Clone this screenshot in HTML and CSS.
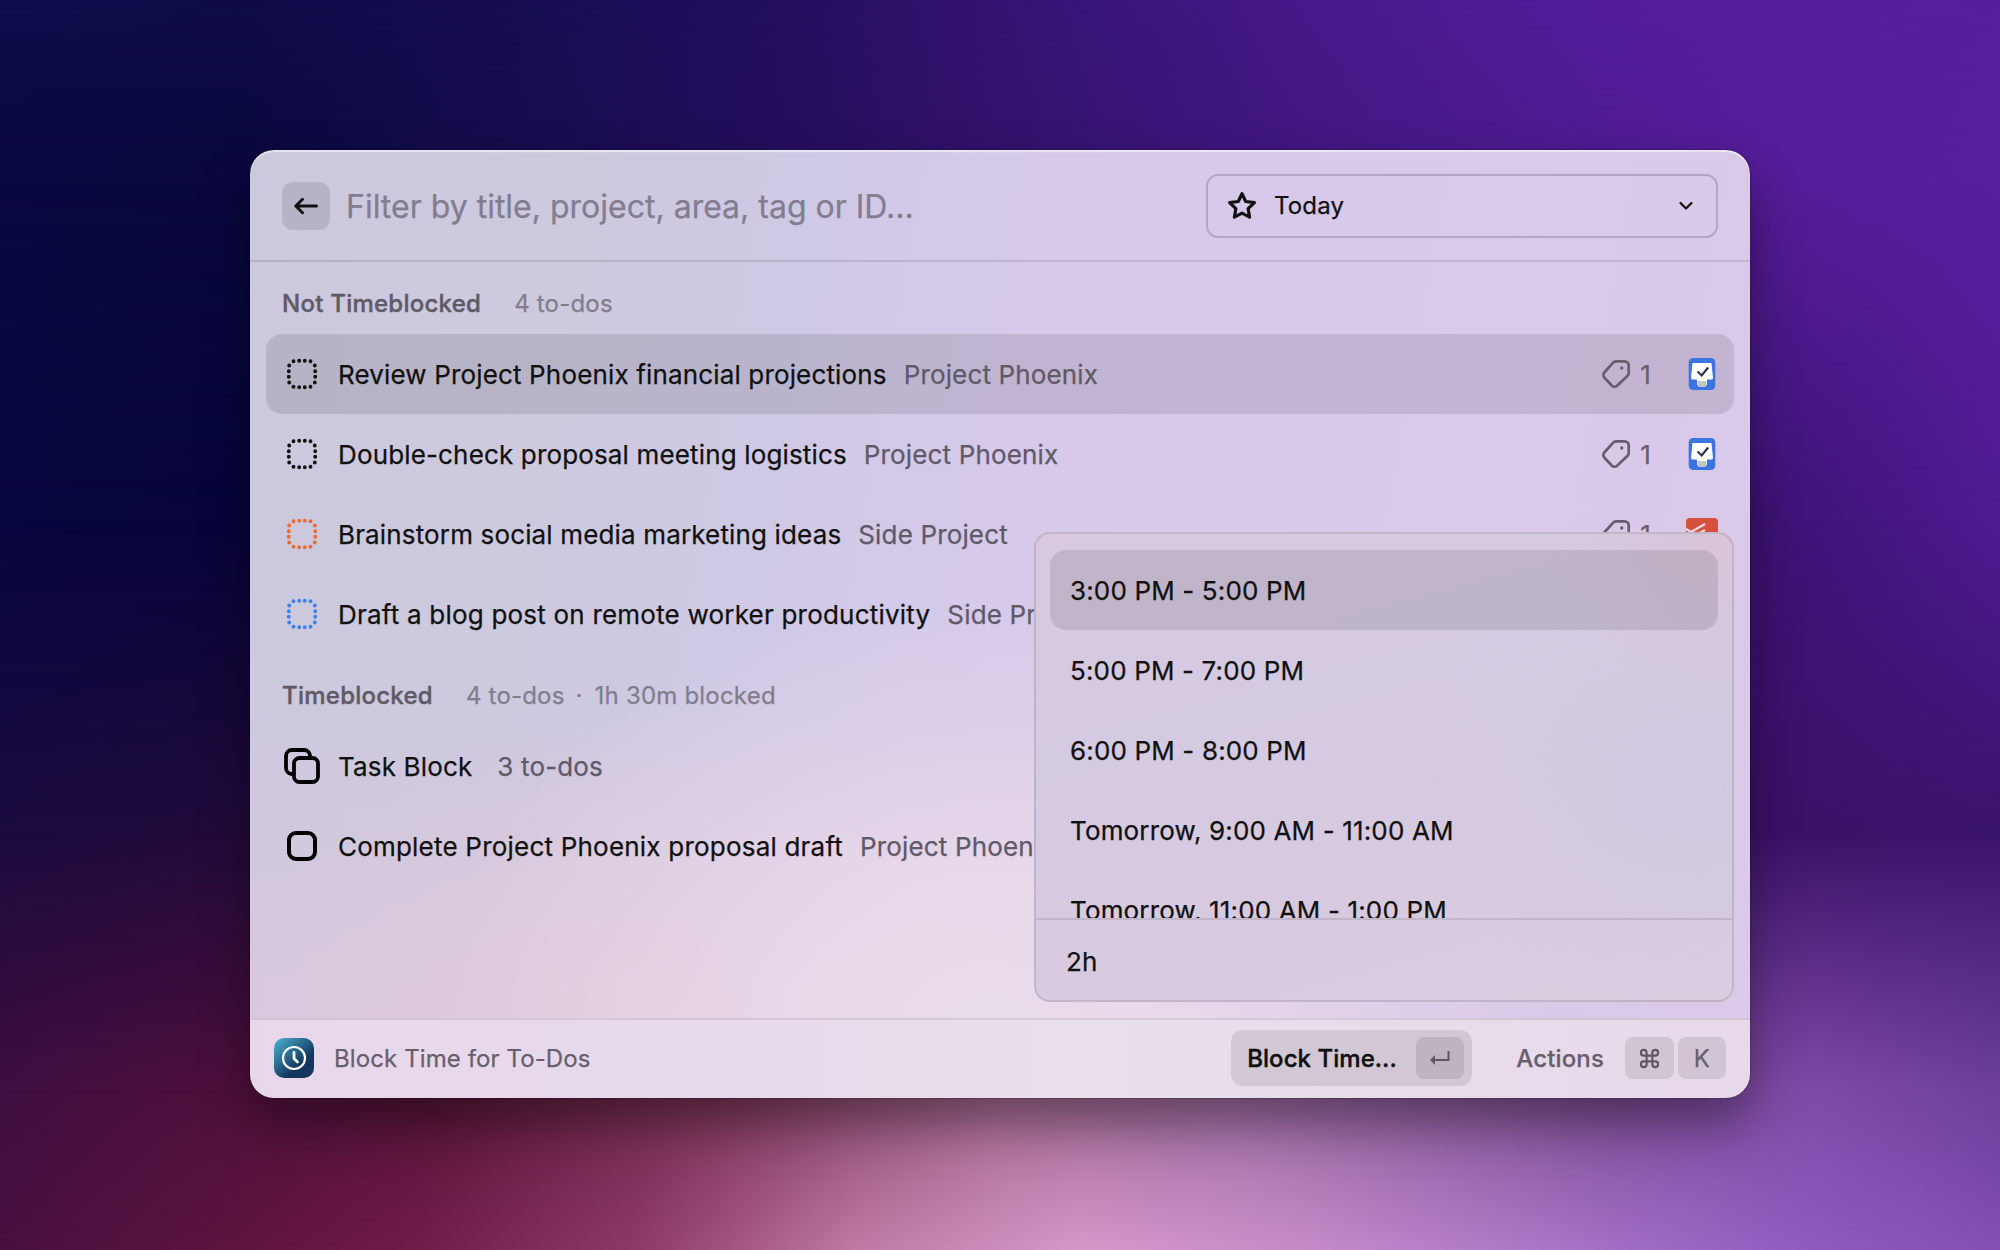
FILE: index.html
```
<!DOCTYPE html>
<html lang="en">
<head>
<meta charset="utf-8">
<title>Block Time for To-Dos</title>
<link rel="stylesheet" href="styles.css">
</head>
<body>
<svg class="defs" width="0" height="0" aria-hidden="true">
  <symbol id="dotted" viewBox="-18 -18 36 36"><path d="M-8.500-12.800h0M-2.800-13.200h0M2.800-13.200h0M8.500-12.800h0M12.800-8.500h0M13.200-2.800h0M13.200 2.800h0M12.800 8.500h0M8.500 12.800h0M2.800 13.200h0M-2.800 13.200h0M-8.500 12.800h0M-12.800 8.500h0M-13.200 2.800h0M-13.200-2.800h0M-12.800-8.500h0" fill="none" stroke="currentColor" stroke-width="3.900" stroke-linecap="round"/></symbol>
  <symbol id="tag" viewBox="0 0 32 32"><path d="M16 3.300h8.700a4 4 0 0 1 4 4v7.700a4 4 0 0 1-1.100 2.800L17.300 27.500a4 4 0 0 1-5.600 0l-7.200-7.700a4 4 0 0 1 0-5.600L13.200 4.600a4 4 0 0 1 2.800-1.300z" fill="none" stroke="currentColor" stroke-width="2.700"/><circle cx="21.700" cy="10" r="1.700" fill="currentColor"/></symbol>
  <symbol id="things" viewBox="0 0 28 32"><rect x=".7" width="26.600" height="32" rx="4.500" fill="#3b74e0"/><path d="M4.500 5h19L25 20a2 2 0 0 1-2 1.500h-4v5.500h-10v-5.500H5A2 2 0 0 1 3 20z" fill="#fff"/><path d="M9.500 23h9v4a2 2 0 0 1-2 2h-5a2 2 0 0 1-2-2z" fill="#c1c4c8"/><path d="M9.500 13.500l4.200 4 6.500-8" fill="none" stroke="#2b3646" stroke-width="2.200"/></symbol>
</svg>
<div class="layer l0"></div><div class="layer l1"></div><div class="layer l2"></div><div class="layer l3"></div><div class="layer l4"></div><div class="layer l5"></div>
<main class="window">
  <header class="top">
    <button class="back"><svg width="26" height="22" viewBox="0 0 26 22" fill="none" stroke="#111" stroke-width="3" stroke-linecap="round" stroke-linejoin="round"><path d="M23.500 11H2.800M9.500 4.300L2.800 11l6.700 6.700"/></svg></button>
    <span class="filter">Filter by title, project, area, tag or ID...</span>
    <div class="select">
      <svg width="32" height="32" viewBox="0 0 32 32" fill="none" stroke="#111" stroke-width="3.200" stroke-linejoin="round"><path d="M16 3.700L19.700 11.500 28.400 12.700 22.100 18.600 23.600 27.200 16 23.200 8.400 27.200 9.900 18.600 3.600 12.700 12.300 11.500z"/></svg>
      <span class="choice">Today</span>
      <svg class="chev" width="14" height="10" viewBox="0 0 14 10" fill="none" stroke="#111" stroke-width="2.200" stroke-linecap="round" stroke-linejoin="round"><path d="M1.500 2L7 7.500 12.500 2"/></svg>
    </div>
  </header>
  <section class="list">
    <h2 class="section"><b>Not Timeblocked</b><span>4 to-dos</span></h2>
    <div class="row selected"><svg class="ico"><use href="#dotted"/></svg><span class="title">Review Project Phoenix financial projections</span><span class="sub">Project Phoenix</span><svg class="tag"><use href="#tag"/></svg><span class="count">1</span><svg class="app"><use href="#things"/></svg></div>
    <div class="row"><svg class="ico"><use href="#dotted"/></svg><span class="title">Double-check proposal meeting logistics</span><span class="sub">Project Phoenix</span><svg class="tag"><use href="#tag"/></svg><span class="count">1</span><svg class="app"><use href="#things"/></svg></div>
    <div class="row"><svg class="ico orange"><use href="#dotted"/></svg><span class="title">Brainstorm social media marketing ideas</span><span class="sub">Side Project</span><svg class="tag"><use href="#tag"/></svg><span class="count">1</span><svg class="app wide" viewBox="0 0 32 32"><rect width="32" height="32" rx="4" fill="#d6503c"/><path d="M0 11l5 3L19 6M0 17l5 3 14-8" fill="none" stroke="#f0dcea" stroke-width="2.200"/></svg></div>
    <div class="row loose"><svg class="ico blue"><use href="#dotted"/></svg><span class="title">Draft a blog post on remote worker productivity</span><span class="sub">Side Project</span></div>
    <h2 class="section"><b>Timeblocked</b><span>4 to-dos <i>·</i> 1h 30m blocked</span></h2>
    <div class="row"><svg class="ico" viewBox="0 0 36 36" fill="none" stroke="#000" stroke-width="3.800"><rect x="10" y="10" width="24" height="24" rx="5.500"/><path d="M10 26H8a6 6 0 0 1-6-6V8a6 6 0 0 1 6-6h12a6 6 0 0 1 6 6v2"/></svg><span class="title">Task Block</span><span class="sub far">3 to-dos</span></div>
    <div class="row loose"><svg class="ico" viewBox="0 0 36 36" fill="none" stroke="#000" stroke-width="4"><rect x="5" y="5" width="26" height="26" rx="7"/></svg><span class="title">Complete Project Phoenix proposal draft</span><span class="sub">Project Phoenix</span></div>
  </section>
  <footer class="bar">
    <svg class="logo" width="40" height="40" viewBox="0 0 40 40"><defs><linearGradient id="g" x1="0" y1="0" x2=".9" y2="1"><stop offset="0" stop-color="#4db4d6"/><stop offset=".7" stop-color="#14365c"/></linearGradient></defs><rect width="40" height="40" rx="10" fill="url(#g)"/><g fill="none" stroke="#fff" stroke-linecap="round" stroke-linejoin="round"><circle cx="20" cy="20" r="11" stroke-width="2.200"/><path d="M20 14.500v6l3.500 3.500" stroke-width="2.800"/></g></svg>
    <span class="name">Block Time for To-Dos</span>
    <div class="primary"><span>Block Time...</span><kbd class="key dark"><svg width="22" height="18" viewBox="0 0 22 18"><path d="M19.500 2v9H5" fill="none" stroke="#5f5864" stroke-width="2"/><path d="M1 11l5-5v10z" fill="#5f5864"/></svg></kbd></div>
    <span class="actions">Actions</span>
    <kbd class="key cmd"><svg width="23" height="23" viewBox="0 0 24 24" fill="none" stroke="#5f5864" stroke-width="2.200"><path d="M18 3a3 3 0 0 0-3 3v12a3 3 0 1 0 3-3H6a3 3 0 1 0 3 3V6a3 3 0 1 0-3 3h12a3 3 0 1 0 0-6z"/></svg></kbd>
    <kbd class="key">K</kbd>
  </footer>
  <aside class="menu">
    <div class="options">
      <div class="opt on">3:00 PM - 5:00 PM</div>
      <div class="opt">5:00 PM - 7:00 PM</div>
      <div class="opt">6:00 PM - 8:00 PM</div>
      <div class="opt">Tomorrow, 9:00 AM - 11:00 AM</div>
      <div class="opt">Tomorrow, 11:00 AM - 1:00 PM</div>
    </div>
    <div class="entry">2h</div>
  </aside>
</main>
</body>
</html>
```
FILE: styles.css
```
* { box-sizing: border-box; margin: 0; }
body { width: 2000px; height: 1250px; overflow: hidden; position: relative; display: flex; justify-content: center; align-items: flex-start; padding-top: 150px; font-family: Inter, "Liberation Sans", sans-serif; font-size: 26px; letter-spacing: .15px; -webkit-text-stroke: .25px; color: #111; background: #0b0a42; }
.defs { position: absolute; }

/* Wallpaper: horizontal colour bands, each faded into the one above. */
.layer { position: absolute; inset: 0; }
.l0 { background: linear-gradient(90deg, #0e0c4b 0, #0e0b48 12%, #150d50 25%, #220f5e 38%, #331371 50%, #46198a 65%, #521d9a 80%, #571f9e 100%); }
.l1 { background: linear-gradient(90deg, #0a0842 0, #0a083e 12%, #150c4c 25%, #230e5a 38%, #32126a 50%, #461886 70%, #541d98 88%, #581f9e 100%); -webkit-mask: linear-gradient(transparent 0, #000 180px); }
.l2 { background: linear-gradient(90deg, #080640 0, #07053a 12%, #180c50 50%, #3c1274 88%, #4e1b91 100%); -webkit-mask: linear-gradient(transparent 180px, #000 520px); }
.l3 { background: linear-gradient(90deg, #1a0a3e 0, #200a3a 12%, #5a2058 50%, #3a1066 88%, #3a136c 100%); -webkit-mask: linear-gradient(transparent 520px, #000 830px); }
.l4 { background: linear-gradient(90deg, #3f0e40 0, #4c0f3c 10%, #571538 22%, #7c3458 36%, #a5688f 50%, #9b6aa0 62%, #7c4c94 80%, #7e4aa8 91%, #6c409c 100%); -webkit-mask: linear-gradient(transparent 830px, #000 1090px); }
.l5 { background: linear-gradient(90deg, #47103f 0, #5a133f 10%, #701a46 20%, #8f3a67 32%, #bf7ba6 43%, #d598c9 54%, #c68cc9 65%, #a974c6 78%, #905cc0 90%, #8250b2 100%); -webkit-mask: linear-gradient(transparent 1090px, #000 1250px); }

.window { position: relative; width: 1500px; height: 948px; border-radius: 24px; display: flex; flex-direction: column; overflow: hidden; isolation: isolate;
  background: radial-gradient(ellipse 560px 420px at 740px 880px, #e9dcea 0, #e9daeaee 30%, #e9d9ea00 100%), radial-gradient(ellipse 440px 320px at 420px 880px, #e5c8d8cc 0, #e5c8d800 100%), radial-gradient(ellipse 700px 420px at 0 100%, #dac8dc 0, #dac8dc00 100%), linear-gradient(100deg, #ccc8de 0, #cdc9df 22%, #cfc9e5 34%, #d7c9ea 50%, #dac9e9 100%);
  box-shadow: inset 0 2px 1px #ffffff90; }
body::after { content: ""; position: absolute; left: 250px; top: 150px; width: 1500px; height: 948px; border-radius: 24px; box-shadow: 0 0 2px #0008, 0 26px 50px #00000060; pointer-events: none; }

.top { height: 112px; border-bottom: 2px solid #0000001a; display: flex; align-items: center; padding: 2px 32px 0; flex: none; }
.back { width: 48px; height: 48px; border: 0; border-radius: 11px; background: #0000001a; display: grid; place-items: center; padding: 0; }
.filter { margin-left: 16px; font-size: 32px; letter-spacing: 0; color: #827d90; }
.select { width: 512px; height: 64px; margin-left: auto; border: 2px solid #0000002c; border-radius: 12px; display: flex; align-items: center; padding: 0 23px 0 18px; gap: 16px; font-size: 24px; }
.choice { padding-bottom: 2px; }
.chev { margin-left: auto; }

.list { flex: 1; padding: 0 16px; min-height: 0; }
.section { height: 72px; padding: 10px 16px 0; display: flex; align-items: center; gap: 33px; font-size: 24px; font-weight: 400; color: #827d8c; letter-spacing: .2px; }
.section b { font-weight: 500; color: #5f5b66; letter-spacing: .25px; -webkit-text-stroke-width: .4px; }
.section i { font-style: normal; margin: 0 5px 0 4px; }
.row { height: 80px; border-radius: 16px; padding: 0 17px 0 18px; display: flex; align-items: center; white-space: nowrap; }
.loose .title { letter-spacing: .21px; }
.selected { background: #0000001a; }
.ico { width: 36px; height: 36px; margin-right: 18px; flex: none; }
.orange { color: #ec6a2e; }
.blue { color: #3c82f2; }
.sub { margin-left: 17px; color: #5f5968; }
.sub.far { margin-left: 25px; }
.tag { width: 32px; height: 32px; margin-left: auto; color: #665d6f; }
.count { color: #665d6f; margin: 0 37px 0 8px; }
.app { width: 28px; height: 32px; margin-right: 1px; }
.wide { width: 32px; margin: 0 -1px 0 -2px; }

.bar { height: 80px; border-top: 2px solid #00000016; background: linear-gradient(90deg, #e8d7ea 0, #e6daeb 30%, #e9deeb 55%, #e7d9ea 100%); display: flex; align-items: center; padding: 0 24px 2px; font-size: 24px; color: #675f6c; flex: none; }
.name { margin-left: 20px; letter-spacing: .1px; }
.primary { margin-left: auto; width: 241px; height: 56px; border-radius: 12px; background: #00000018; display: flex; align-items: center; justify-content: space-between; padding: 0 8px 0 16px; color: #111; font-weight: 500; letter-spacing: .05px; -webkit-text-stroke-width: .4px; }
.key { width: 48px; height: 42px; border-radius: 8px; background: #00000018; display: grid; place-items: center; font: inherit; margin-left: 4px; }
.cmd { width: 49px; }
.dark { margin: 0; }
.actions { margin: 0 17px 0 44px; font-weight: 500; }

.menu { position: absolute; left: 784px; top: 382px; width: 700px; height: 470px; border: 2px solid #0000001a; border-radius: 16px; overflow: hidden; display: flex; flex-direction: column; background: radial-gradient(ellipse 180px 160px at 100% 0, #d8c4d8 0, #d8c4d800 100%), radial-gradient(ellipse 300px 220px at 95% 55%, #d0c9e1 0, #d0c9e100 100%), linear-gradient(165deg, #d8c9e0 0, #d4cae2 35%, #d7cae0 65%, #dacddf 100%); }
.options { height: 384px; padding: 16px 14px 0; overflow: hidden; flex: none; }
.opt { height: 80px; padding: 0 20px; display: flex; align-items: center; border-radius: 16px; }
.on { background: #0000001a; }
.entry { flex: 1; border-top: 2px solid #0000001a; padding: 2px 0 0 30px; display: flex; align-items: center; }
```
